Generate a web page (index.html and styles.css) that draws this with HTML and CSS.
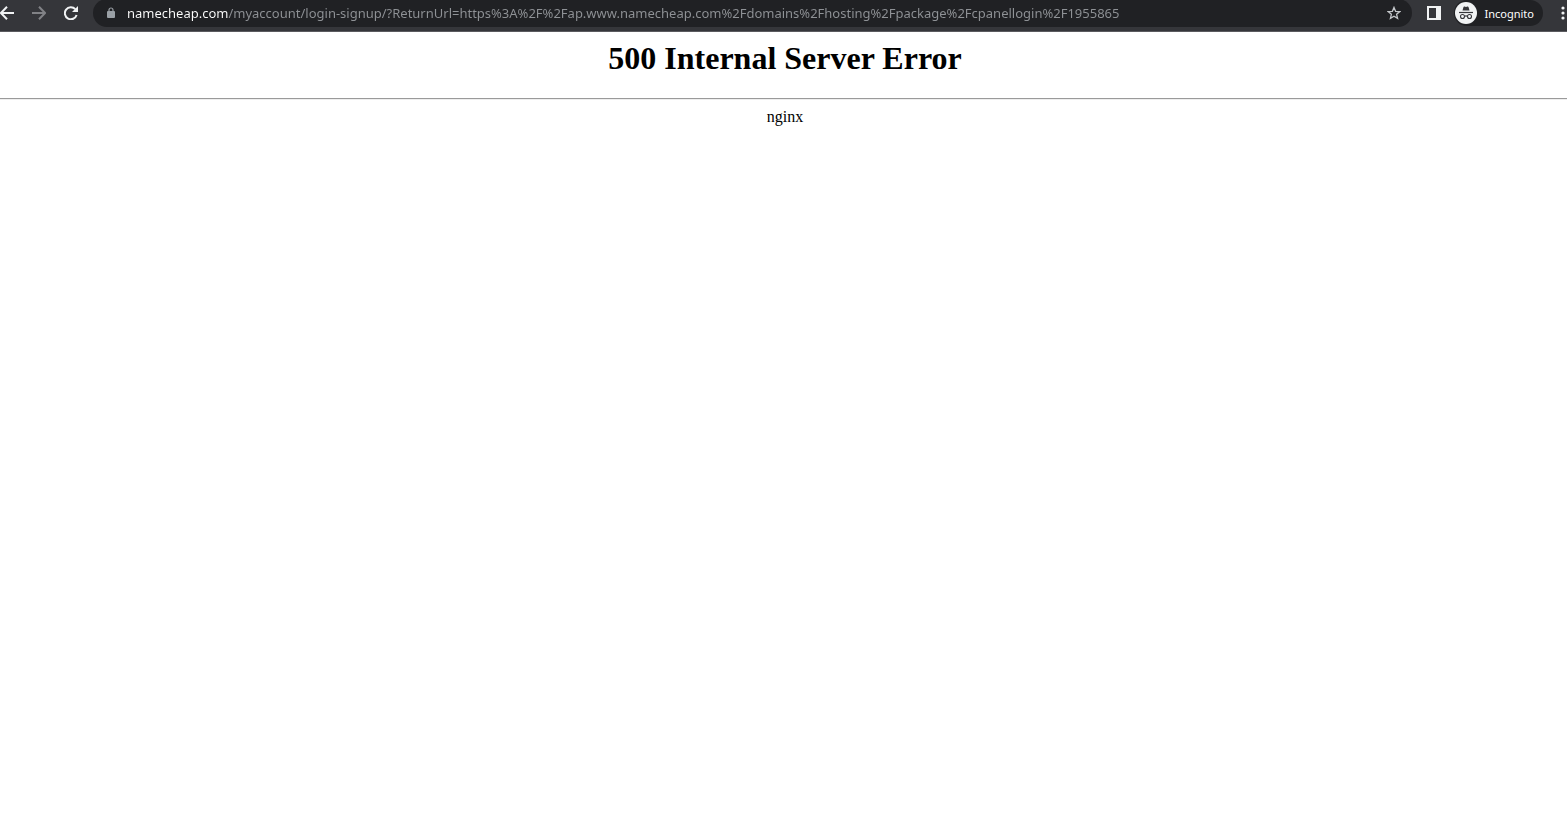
FILE: index.html
```html
<!DOCTYPE html>
<html lang="en">
<head>
    <meta charset="UTF-8">
    <meta name="viewport" content="width=device-width, initial-scale=1.0">
    <title>500 Internal Server Error</title>
    <link rel="stylesheet" href="styles.css">
</head>
<body>
    <header class="toolbar">
        <nav class="nav-buttons">
            <button class="icon-btn" type="button" aria-label="Back">
                <svg width="14" height="14" viewBox="0 0 14 14" fill="none" stroke="currentColor" stroke-width="2"><path d="M14 7H1.5M7 .7L.9 7 7 13.3"/></svg>
            </button>
            <button class="icon-btn forward" type="button" aria-label="Forward">
                <svg width="14" height="14" viewBox="0 0 14 14" fill="none" stroke="currentColor" stroke-width="2"><path d="M0 7h12.5M7 .7L13.1 7 7 13.3"/></svg>
            </button>
            <button class="icon-btn" type="button" aria-label="Reload">
                <svg width="14" height="14" viewBox="0 0 14 14"><path d="M11.3 3.2A6 6 0 1 0 12.6 9" fill="none" stroke="currentColor" stroke-width="2"/><path d="M14 0v6H8z" fill="currentColor"/></svg>
            </button>
        </nav>
        <div class="omnibox">
            <svg class="lock" width="8" height="12" viewBox="0 0 8 12"><rect y="4" width="8" height="7" rx="1" fill="currentColor"/><path d="M2 4.5V3a2 2 0 0 1 4 0v1.5" fill="none" stroke="currentColor" stroke-width="1.2"/></svg>
            <input class="url" type="text" aria-label="Address" spellcheck="false" value="namecheap.com/myaccount/login-signup/?ReturnUrl=https%3A%2F%2Fap.www.namecheap.com%2Fdomains%2Fhosting%2Fpackage%2Fcpanellogin%2F1955865">
            <button class="icon-btn star" type="button" aria-label="Bookmark">
                <svg width="14" height="14" viewBox="0 0 14 14" fill="none" stroke="currentColor" stroke-width="1.3"><path d="M7 1.4l1.6 3.9 4.2.3-3.2 2.7 1 4.1L7 10.2l-3.6 2.2 1-4.1L1.2 5.6l4.2-.3z"/></svg>
            </button>
        </div>
        <button class="icon-btn panel" type="button" aria-label="Side panel">
            <svg width="14" height="14" viewBox="0 0 14 14"><path fill="currentColor" fill-rule="evenodd" d="M0 0h14v14H0zM2 2v10h7V2z"/></svg>
        </button>
        <button class="profile" type="button">
            <svg width="22" height="22" viewBox="0 0 22 22">
                <circle cx="11" cy="11" r="11" fill="#f1f3f4"/>
                <path d="M7.5 8.5L8.5 5q.3-.8 1.1-.5l1.4.4 1.4-.4q.8-.3 1.1.5l1 3.5z" fill="#35363a"/>
                <path d="M4 10.500h14" stroke="#35363a" stroke-width="1.2"/>
                <g fill="none" stroke="#35363a" stroke-width="1.1"><circle cx="7.5" cy="14.5" r="2"/><circle cx="14.5" cy="14.5" r="2"/><path d="M9.5 14.3q1.5-.8 3 0"/></g>
            </svg>
            <span>Incognito</span>
        </button>
        <button class="icon-btn menu" type="button" aria-label="Menu">
            <svg width="4" height="14" viewBox="0 0 4 14" fill="currentColor"><circle cx="2" cy="2" r="1.6"/><circle cx="2" cy="7" r="1.6"/><circle cx="2" cy="12" r="1.6"/></svg>
        </button>
    </header>
    <main class="error-page">
        <h1>500 Internal Server Error</h1>
        <hr>
        <p>nginx</p>
    </main>
</body>
</html>
```

FILE: styles.css
```css
body {
    margin: 0;
    background: #fff;
    color: #000;
    font-family: "Liberation Serif", "Times New Roman", serif;
}
button, input {
    border: none;
    padding: 0;
    margin: 0;
    background: none;
}
button {
    cursor: pointer;
}
svg {
    display: block;
    flex: none;
}
.toolbar {
    display: flex;
    align-items: center;
    box-sizing: border-box;
    height: 32px;
    padding-bottom: 5px;
    background: #35363a;
    border-bottom: 1px solid #5b5b5f;
    color: #f1f3f4;
    font-family: "Noto Sans", "Segoe UI", sans-serif;
}
.nav-buttons {
    display: flex;
    gap: 18px;
    margin-right: 15px;
}
.icon-btn {
    flex: none;
    color: #f1f3f4;
}
.forward {
    color: #818286;
}
.omnibox {
    flex: 1;
    min-width: 0;
    display: flex;
    align-items: center;
    height: 28px;
    padding: 0 11px 0 14px;
    border-radius: 14px;
    background: #202124;
}
.lock {
    margin-right: 12px;
    color: #9aa0a6;
}
/* domain part is white, the rest of the address is grey */
.url {
    flex: 1;
    min-width: 0;
    height: 26px;
    font-family: "Noto Sans", "Segoe UI", sans-serif;
    font-size: 13px;
    background: linear-gradient(to right, #fff 101px, #8f9296 101px);
    -webkit-background-clip: text;
    background-clip: text;
    -webkit-text-fill-color: transparent;
    outline: none;
}
.star {
    color: #c4c7ca;
}
.panel {
    margin: 0 13px 0 15px;
}
.profile {
    display: flex;
    align-items: center;
    gap: 8px;
    height: 26px;
    padding: 0 9px 0 1px;
    border-radius: 13px;
    background: #202124;
    color: #fff;
    font-family: "Noto Sans", "Segoe UI", sans-serif;
    font-size: 11px;
}
.menu {
    margin: 0 2px 0 18px;
}
.error-page {
    padding-top: 8px;
    text-align: center;
}
.error-page h1 {
    margin: 0 0 21px;
    padding-left: 3px;
    font-size: 32px;
    line-height: 37px;
}
.error-page hr {
    margin: 0 0 8px;
    border-width: 1px 0;
}
.error-page p {
    margin: 0;
    padding-left: 3px;
    font-size: 16px;
    line-height: 18px;
}
```
